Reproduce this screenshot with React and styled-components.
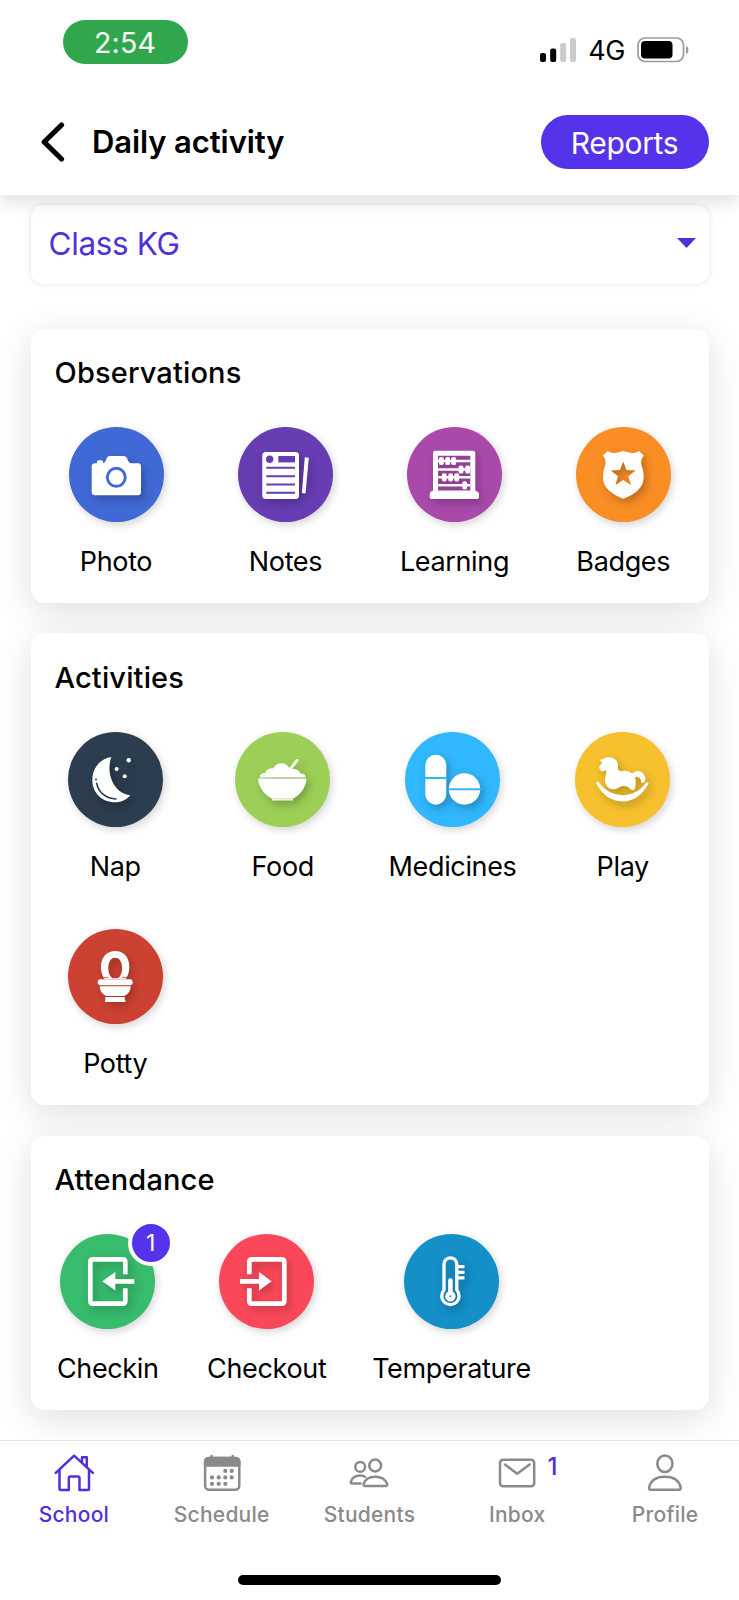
import React from 'react'
import styled, { createGlobalStyle } from 'styled-components'

const GlobalStyle = createGlobalStyle`
  * {
    box-sizing: border-box;
  }

  body {
    margin: 0;
    background-color: #FFFFFF;
    font-family: Inter, "Liberation Sans", sans-serif;
    color: #000000;
  }

  h1, h2, p {
    margin: 0;
  }

  button {
    font-family: inherit;
    border: none;
    padding: 0;
    background: none;
  }

  svg {
    display: block;
  }
`

const Screen = styled.div`
  width: 739px;
  height: 1600px;
  display: flex;
  flex-direction: column;
  overflow: hidden;
  background-color: #FFFFFF;
`

const Header = styled.header`
  position: relative;
  z-index: 2;
  flex: none;
  height: 195px;
  background-color: #FFFFFF;
  box-shadow: 0 8px 16px rgba(0, 0, 0, 0.11);
`

const StatusBar = styled.div`
  height: 84px;
  padding: 20px 50px 0 62.5px;
  display: flex;
  justify-content: space-between;
  align-items: flex-start;
`

const Clock = styled.div`
  width: 125px;
  height: 44px;
  border-radius: 22px;
  background-color: #30A74D;
  color: #FFFFFF;
  font-size: 28.5px;
  line-height: 46px;
  text-align: center;
  letter-spacing: 0.2px;
`

const StatusIcons = styled.div`
  display: flex;
  align-items: center;
  gap: 12px;
  padding-top: 17px;
  height: 42px;

  & p {
    padding-top: 2px;
    font-size: 27px;
    line-height: 26px;
    letter-spacing: -0.4px;
  }
`

const TitleBar = styled.div`
  height: 116px;
  padding: 0 30.5px 0 41px;
  display: flex;
  align-items: center;

  & h1 {
    flex: 1;
    padding-left: 27px;
    font-size: 31px;
    font-weight: 600;
    line-height: 40px;
    letter-spacing: -0.1px;
  }
`

const ReportsButton = styled.button`
  width: 168px;
  height: 54px;
  border-radius: 27px;
  background-color: #5533EA;
  color: #FFFFFF;
  font-size: 30px;
  line-height: 56px;
  letter-spacing: -0.3px;
`

const Content = styled.main`
  flex: 1;
  min-height: 0;
  overflow: hidden;
  padding: 10px 30.5px 0;
  display: flex;
  flex-direction: column;
`

const ClassSelect = styled.div`
  flex: none;
  height: 78.5px;
  margin-bottom: 45px;
  padding: 0 13px 3px 18px;
  display: flex;
  align-items: center;
  justify-content: space-between;
  border-radius: 12px;
  background-color: #FFFFFF;
  box-shadow: 0 0 6px rgba(0, 0, 0, 0.11);

  & p {
    padding-top: 3px;
    color: #5130DA;
    font-size: 31.5px;
    line-height: 40px;
    letter-spacing: -0.35px;
  }
`

const Card = styled.section`
  flex: none;
  height: ${({ $height }) => $height}px;
  margin-bottom: 30.5px;
  border-radius: 14px;
  background-color: #FFFFFF;
  box-shadow: 0 8px 36px rgba(0, 0, 0, 0.13);

  & h2 {
    padding: 25.5px 0 0 24px;
    font-size: 29px;
    font-weight: 500;
    line-height: 38px;
    letter-spacing: 0.15px;
  }
`

const Tiles = styled.div`
  display: grid;
  grid-template-columns: ${({ $columns }) => $columns};
  grid-auto-rows: 197px;
  padding-top: 35px;
`

const Tile = styled.div`
  display: flex;
  flex-direction: column;
  align-items: center;

  & p {
    margin-top: 23px;
    font-size: 27px;
    line-height: 34px;
    white-space: nowrap;
    letter-spacing: -0.35px;
  }
`

const Circle = styled.div`
  position: relative;
  width: 95px;
  height: 95px;
  border-radius: 50%;
  background-color: ${({ $color }) => $color};
  box-shadow: 2px 3px 9px rgba(0, 0, 0, 0.17);

  & svg {
    filter: drop-shadow(3px 4px 4px rgba(0, 0, 0, 0.24));
  }
`

const Count = styled.span`
  position: absolute;
  top: -14px;
  right: -18.5px;
  width: 46px;
  height: 46px;
  border: 4px solid #FFFFFF;
  border-radius: 50%;
  background-color: #5533EA;
  color: #FFFFFF;
  font-size: 23px;
  line-height: 39px;
  text-align: center;
`

const TabBar = styled.nav`
  position: relative;
  z-index: 2;
  flex: none;
  height: 160px;
  border-top: 1px solid #E2E2E2;
  background-color: #FFFFFF;
  display: flex;
  flex-direction: column;
  align-items: center;
`

const Tabs = styled.div`
  width: 100%;
  height: 134px;
  display: grid;
  grid-template-columns: repeat(5, 1fr);
`

const Tab = styled.div`
  position: relative;
  padding-top: 12px;
  display: flex;
  flex-direction: column;
  align-items: center;
  color: ${({ $active }) => ($active ? '#5130DA' : '#8A8A8A')};

  & p {
    margin-top: 9px;
    font-size: 21px;
    font-weight: 500;
    line-height: 26px;
    letter-spacing: 0.25px;
  }
`

const Unread = styled.span`
  position: absolute;
  top: 11px;
  left: 104px;
  color: #5130DA;
  font-size: 24px;
  font-weight: 500;
  line-height: 30px;
`

const HomeIndicator = styled.div`
  width: 263px;
  height: 10px;
  border-radius: 5px;
  background-color: #000000;
`

function Glyph({ children }) {
  return (
    <svg width="95" height="95" viewBox="0 0 95 95" fill="#FFFFFF">
      {children}
    </svg>
  )
}

function PhotoIcon({ color }) {
  return (
    <Glyph>
      <path d="M26 36.3h2v-1.500q0-1.500 1.500-1.500h3q1.500 0 1.500 1.500v1.200q2.200 0 3.500-4.500q.8-2.500 3-2.500h14.500q2.200 0 3.200 2.500q1.500 4.800 3.800 4.800H69q3 0 3 3v26q0 3-3 3H26q-3.300 0-3.300-3v-26q0-3 3.300-3z" />
      <circle cx="47.300" cy="50.300" r="9" stroke={color} strokeWidth="2.900" />
    </Glyph>
  )
}

function NotesIcon({ color }) {
  return (
    <Glyph>
      <rect x="24.300" y="25" width="36.700" height="47" rx="3.500" />
      <circle cx="31.700" cy="32.300" r="3.700" fill={color} />
      <rect x="40.300" y="29" width="16.700" height="6.400" fill={color} />
      <path d="M28.300 40.800H57M28.300 49.200H57M28.300 57.500H57M28.300 65.800H57" stroke={color} strokeWidth="2" />
      <path d="M66.800 30.300l4 .4-3.300 35.800-3.600-.6z" />
    </Glyph>
  )
}

function LearningIcon() {
  const beads = [[34.3, 34], [40.7, 34], [46.7, 34], [54, 42.5], [60.7, 42.5], [37.3, 50.3], [43.7, 50.3], [49.7, 50.3], [57.7, 58.3]]

  return (
    <Glyph>
      <path fillRule="evenodd" d="M28.500 23.700h37.300q2.500 0 2.500 2.500v37.500q3.700.5 3.700 4v2.600q0 1.700-1.700 1.700H24.400q-1.700 0-1.700-1.700v-2.600q0-3.500 3.300-4V26.200q0-2.500 2.500-2.500zM31 28.700v34.700h32.300V28.700z" />
      <path d="M31 34h32.300M31 42.500h32.300M31 50.300h32.300M31 58.300h32.300" stroke="#FFFFFF" strokeWidth="2.500" />
      {beads.map(([x, y]) => (
        <rect key={`${x}-${y}`} x={x - 2.4} y={y - 4.1} width="4.800" height="8.200" rx="1.900" />
      ))}
    </Glyph>
  )
}

function BadgesIcon() {
  return (
    <Glyph>
      <path
        fillRule="evenodd"
        d="M31.500 24q3.500 2.500 8.500 1.800q4-.6 7.300-1.800q3.300 1.200 7.300 1.800q5 .7 8.500-1.800l4.700 4.500q-4 4.500-2 10.500q2.400 6.500 1.800 12.500q-.6 12.700-20.300 20.300Q27.600 64.200 27 51.500q-.5-6 1.900-12.500q2-6-2-10.500zM47.200 34.500l3.200 8.600 9.200.4-7.200 5.700 2.500 8.900-7.700-5.100-7.700 5.100 2.500-8.900-7.200-5.700 9.200-.4z"
      />
    </Glyph>
  )
}

function NapIcon({ color }) {
  return (
    <Glyph>
      <path d="M43.300 25C31 27 24.300 37 24.300 48c0 13 10 22.300 22.500 22.300 7 0 12.300-3 15.500-7.100C46 61.500 37.500 42 43.300 25z" />
      <path d="M28.600 51.200C30.300 60.500 38 66.600 48 67" fill="none" stroke={color} strokeWidth="1.600" strokeLinecap="round" />
      <circle cx="28" cy="47.400" r="1" fill={color} />
      <circle cx="60.700" cy="28.300" r="2.200" />
      <circle cx="48.700" cy="37" r="2" />
      <circle cx="56.700" cy="44.300" r="2" />
    </Glyph>
  )
}

function FoodIcon({ color }) {
  return (
    <Glyph>
      <path d="M25 45.600q-.5-4.600 5.300-4.600q1.500-5 7.700-4.600q3-5.400 8.700-5.100 5.300.2 7.500 4.700l6.600-8.300q1.200-1.200 2.200-.4t0 2.200l-5.800 7.500q6-.4 8.300 4.400q4.900-.2 5 4.200z" />
      <path d="M23.300 46.400h48q.4 3.300-.8 5.600Q67 62 58 66.800v1.600H37v-1.600Q27.500 62 24.100 52q-1.200-2.300-.8-5.600z" />
      <path d="M37.500 66.800h20.500" stroke={color} strokeWidth=".6" />
    </Glyph>
  )
}

function MedicinesIcon({ color }) {
  return (
    <Glyph>
      <rect x="20.300" y="22.700" width="21" height="50" rx="10.500" />
      <circle cx="59.500" cy="57" r="15.700" />
      <path d="M20 46h22M43.500 57.300h32" stroke={color} strokeWidth="1.900" />
    </Glyph>
  )
}

function PlayIcon() {
  return (
    <Glyph>
      <path d="M25.500 27.500C28 28 29 25.300 34 25.300C40 25.300 43.500 29.500 43 35.500C43 38.500 44.500 39.600 47 39.200C51 38.300 54.500 39.300 57 41.700C60 38.600 64 38.300 67 40.500C69.800 42.600 70.800 45.500 70.400 48.300C69.800 50 68.300 51 67 51.200C66 50.500 66.600 49 65.500 47C64.300 44.900 62 44.300 60 45.200C61.200 48.500 60.800 53 60 56.500C58.800 58.300 57 58.300 55.500 57.500C54 54.700 51 53.500 47.700 54C44 54.500 42.500 57.500 38.500 57.300C33 57 30 53 30 48C30 44.500 31.300 42 31.200 38.400C30 37.600 29.500 38.800 28.200 39.300C26 39.500 24.200 37.500 24.200 35C24.500 33 27 31.800 27 30.200C25.700 29.700 24.700 28.500 25.500 27.500z" />
      <path d="M21 50.600q1.500-1.600 3 0C36 67.300 59.500 67.200 70.700 51q1.500-1.400 2.900.3C62 75.800 32 75.600 21 50.600z" />
    </Glyph>
  )
}

function PottyIcon({ color }) {
  return (
    <Glyph>
      <path fillRule="evenodd" d="M36.500 50C29.500 39 33 22 47.200 22s17.700 17 10.700 28zM47.200 28.700C42.500 28.700 40.300 33.500 40.300 39.500C40.300 44 42 47.500 44.500 49.300h5.400C52.400 47.500 54.100 44 54.100 39.500C54.100 33.500 51.900 28.700 47.200 28.700z" />
      <path d="M35.500 48.600h5M54 48.600h5" stroke={color} strokeWidth=".8" />
      <rect x="29.700" y="50.200" width="35" height="6" rx="3" />
      <path d="M31.700 57.200h31q0 6.300-6.200 9.900H38q-6.300-3.600-6.300-9.900zM37.300 67.900h19.500v3.100h.6v2.100H37V71h.3z" />
    </Glyph>
  )
}

function CheckinIcon() {
  return (
    <Glyph>
      <path d="M65.300 40.300V28q0-2.700-2.700-2.700H33q-2.700 0-2.700 2.700v39q0 2.700 2.700 2.700h29.600q2.700 0 2.700-2.700V54.300" fill="none" stroke="#FFFFFF" strokeWidth="4.700" />
      <path d="M74.300 45v4.700h-19v6.900L42.300 47.300l13-9.300v7z" />
    </Glyph>
  )
}

function CheckoutIcon() {
  return (
    <Glyph>
      <path d="M30.300 40.300V28q0-2.700 2.700-2.700h29.600q2.700 0 2.700 2.700v39q0 2.700-2.700 2.700H33q-2.700 0-2.700-2.700V54.300" fill="none" stroke="#FFFFFF" strokeWidth="4.700" />
      <path d="M21 45v4.700h19v6.900l12.600-9.300L40 38v7z" />
    </Glyph>
  )
}

function TemperatureIcon({ color }) {
  return (
    <Glyph>
      <path d="M40 56V30.200a6.400 6.400 0 0 1 12.800 0V56a8.700 8.700 0 1 1-12.800 0z" fill="none" stroke="#FFFFFF" strokeWidth="3.300" />
      <path d="M46.400 46.500V60" stroke="#FFFFFF" strokeWidth="4.600" strokeLinecap="round" />
      <circle cx="46.400" cy="62.300" r="5.200" />
      <circle cx="46.400" cy="62.300" r="1" fill={color} />
      <path d="M53.300 32.600h7.200M53.300 38.300h7.200M53.300 43.800h7.200" stroke="#FFFFFF" strokeWidth="3.300" />
    </Glyph>
  )
}

function TabGlyph({ children }) {
  return (
    <svg width="40" height="40" viewBox="0 0 40 40" fill="none" stroke="currentColor" strokeWidth="2.500" strokeLinecap="round" strokeLinejoin="round">
      {children}
    </svg>
  )
}

function SchoolIcon() {
  return (
    <TabGlyph>
      <path d="M1.800 19.800L20.100 2.700 38.800 19.800M28 9.500V4.200h4.800v9.500M5.500 17v19q0 1 1 1h8.300V25.300q0-1.700 1.700-1.700h7.300q1.700 0 1.700 1.700V37h8.500q1 0 1-1V17" />
    </TabGlyph>
  )
}

function ScheduleIcon() {
  const dots = [[23.3, 17.9], [29.7, 17.9], [10, 24.4], [16.7, 24.4], [23.3, 24.4], [29.7, 24.4], [10, 30.8], [16.7, 30.8], [23.3, 30.8]]

  return (
    <TabGlyph>
      <rect x="3.100" y="5" width="34.200" height="31.700" rx="4" />
      <path d="M3.100 12.500V9q0-4 4-4h26.200q4 0 4 4v3.500z" fill="currentColor" />
      <path d="M9.700 3v3M30.700 3v3" strokeWidth="2.600" />
      {dots.map(([x, y]) => (
        <circle key={`${x}-${y}`} cx={x} cy={y} r="2.100" fill="currentColor" stroke="none" />
      ))}
    </TabGlyph>
  )
}

function StudentsIcon() {
  return (
    <TabGlyph>
      <circle cx="11.200" cy="13.900" r="4.900" />
      <circle cx="26.200" cy="12.500" r="5.900" />
      <path d="M11.500 30.400H3q-1.500 0-1.200-1.600 2.200-6.300 9.400-6.300 3 0 4.800 1.300M16 32.900q-1.800 0-1.400-2 2.400-7.200 11.600-7.200t12 7.200q.4 2-1.400 2z" />
    </TabGlyph>
  )
}

function InboxIcon() {
  return (
    <TabGlyph>
      <rect x="3" y="6.700" width="34.200" height="26.600" rx="3" />
      <path d="M8 11.600l12.200 9.200 12.400-9.200" />
    </TabGlyph>
  )
}

function ProfileIcon() {
  return (
    <TabGlyph>
      <ellipse cx="19.900" cy="10.700" rx="7.600" ry="8.300" />
      <path d="M5.600 36.800q-1.700 0-1.500-2.200Q6.300 23.700 19.900 23.700t15.800 10.900q.2 2.200-1.500 2.200z" />
    </TabGlyph>
  )
}

const sections = [
  {
    title: 'Observations',
    height: 274,
    columns: '171px 168px 170px 167.500px',
    tiles: [
      { label: 'Photo', color: '#4069D6', Icon: PhotoIcon },
      { label: 'Notes', color: '#673DB3', Icon: NotesIcon },
      { label: 'Learning', color: '#A94AAA', Icon: LearningIcon },
      { label: 'Badges', color: '#FA8D24', Icon: BadgesIcon },
    ],
  },
  {
    title: 'Activities',
    height: 472,
    columns: '169.500px 165.500px 174px 166.500px',
    tiles: [
      { label: 'Nap', color: '#2B3D4F', Icon: NapIcon },
      { label: 'Food', color: '#9DCF56', Icon: FoodIcon },
      { label: 'Medicines', color: '#30B7FD', Icon: MedicinesIcon },
      { label: 'Play', color: '#F6C02E', Icon: PlayIcon },
      { label: 'Potty', color: '#CC4232', Icon: PottyIcon },
    ],
  },
  {
    title: 'Attendance',
    height: 274,
    columns: '154.500px 163.500px 206px',
    tiles: [
      { label: 'Checkin', color: '#37BB6D', Icon: CheckinIcon, count: 1 },
      { label: 'Checkout', color: '#FA485A', Icon: CheckoutIcon },
      { label: 'Temperature', color: '#148FC8', Icon: TemperatureIcon },
    ],
  },
]

const tabs = [
  { label: 'School', Icon: SchoolIcon, active: true },
  { label: 'Schedule', Icon: ScheduleIcon },
  { label: 'Students', Icon: StudentsIcon },
  { label: 'Inbox', Icon: InboxIcon, unread: 1 },
  { label: 'Profile', Icon: ProfileIcon },
]

function App() {
  return (
    <>
      <GlobalStyle />
      <Screen>
        <Header>
          <StatusBar>
            <Clock>2:54</Clock>
            <StatusIcons>
              <svg width="37" height="24" viewBox="0 0 37 24">
                <rect x="1" y="15" width="6" height="9" rx="2" />
                <rect x="11.200" y="10.500" width="6" height="13.500" rx="2" />
                <rect x="21.200" y="5" width="6" height="19" rx="2" fill="#CBCBCB" />
                <rect x="31" y="0" width="6" height="24" rx="2" fill="#CBCBCB" />
              </svg>
              <p>4G</p>
              <svg width="52" height="26" viewBox="0 0 52 26">
                <rect x="1" y="1" width="45.500" height="23.500" rx="7" fill="none" stroke="#9C9C9C" strokeWidth="1.700" />
                <rect x="4" y="4" width="31.500" height="17.500" rx="4" />
                <path d="M49 9q2.500 1 2.500 4T49 17z" fill="#9C9C9C" />
              </svg>
            </StatusIcons>
          </StatusBar>
          <TitleBar>
            <svg width="24" height="40" viewBox="0 0 24 40" fill="none" stroke="#000000" strokeWidth="5.200" strokeLinecap="round" strokeLinejoin="round">
              <path d="M20.500 3L3.200 20l17.300 17" />
            </svg>
            <h1>Daily activity</h1>
            <ReportsButton>Reports</ReportsButton>
          </TitleBar>
        </Header>
        <Content>
          <ClassSelect>
            <p>Class KG</p>
            <svg width="19" height="10" viewBox="0 0 19 10" fill="#5130DA">
              <path d="M0 0h19L9.500 10z" />
            </svg>
          </ClassSelect>
          {sections.map(({ title, height, columns, tiles }) => (
            <Card key={title} $height={height}>
              <h2>{title}</h2>
              <Tiles $columns={columns}>
                {tiles.map(({ label, color, Icon, count }) => (
                  <Tile key={label}>
                    <Circle $color={color}>
                      <Icon color={color} />
                      {count && <Count>{count}</Count>}
                    </Circle>
                    <p>{label}</p>
                  </Tile>
                ))}
              </Tiles>
            </Card>
          ))}
        </Content>
        <TabBar>
          <Tabs>
            {tabs.map(({ label, Icon, active, unread }) => (
              <Tab key={label} $active={active}>
                <Icon />
                <p>{label}</p>
                {unread && <Unread>{unread}</Unread>}
              </Tab>
            ))}
          </Tabs>
          <HomeIndicator />
        </TabBar>
      </Screen>
    </>
  )
}

export default App
